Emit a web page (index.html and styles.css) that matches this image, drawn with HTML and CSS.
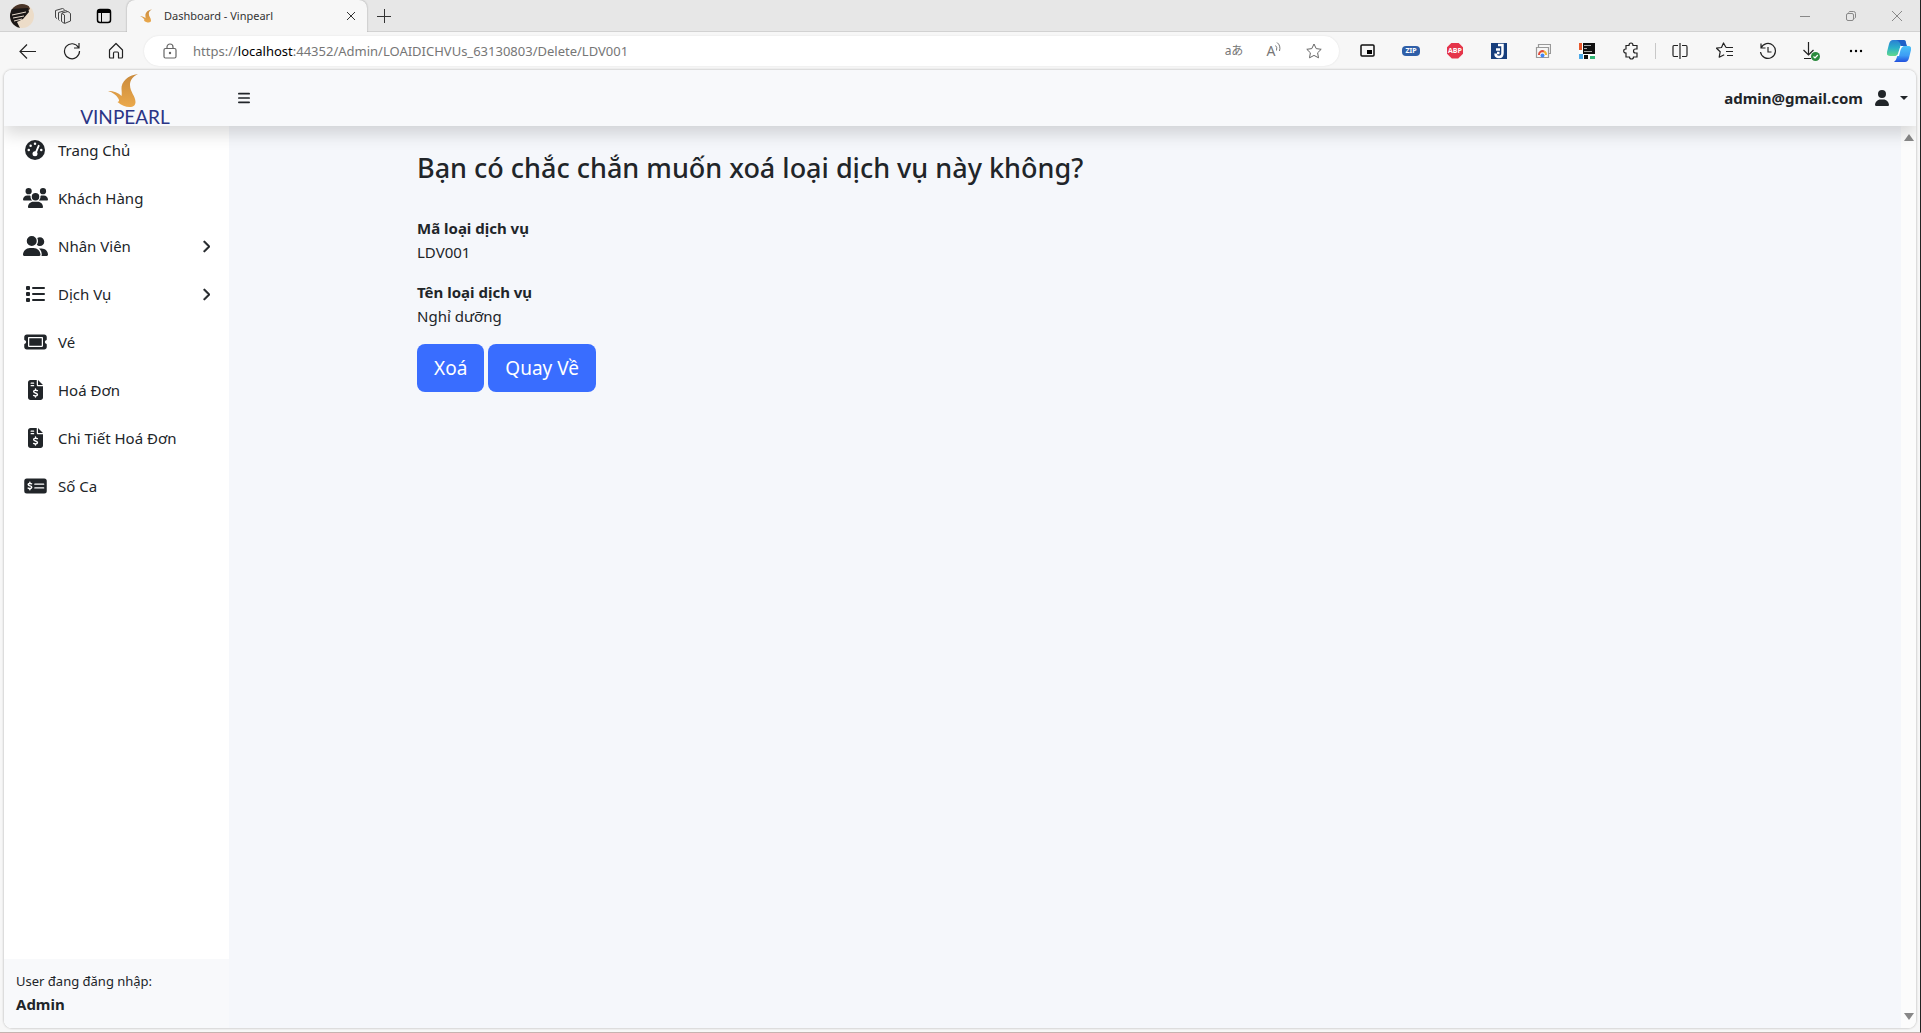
FILE: index.html
```html
<!DOCTYPE html>
<html lang="vi">
<head>
<meta charset="utf-8">
<title>Dashboard - Vinpearl</title>
<link rel="stylesheet" href="styles.css">
</head>
<body>
<svg class="defs" aria-hidden="true">
  <defs>
    <linearGradient id="gold" x1="0" y1="0" x2="0" y2="1"><stop offset="0" stop-color="#c98a3c"/><stop offset="1" stop-color="#eba94c"/></linearGradient>
    <linearGradient id="cpA" x1="0" y1="0" x2="0" y2="1"><stop offset="0" stop-color="#2a7fd4"/><stop offset=".5" stop-color="#2bb0c9"/><stop offset="1" stop-color="#63d98b"/></linearGradient>
    <linearGradient id="cpB" x1="0" y1="0" x2="0" y2="1"><stop offset="0" stop-color="#4cc3f7"/><stop offset=".6" stop-color="#3d9cf5"/><stop offset="1" stop-color="#2250dd"/></linearGradient>
    <clipPath id="round"><circle cx="12" cy="12" r="12"/></clipPath>
    <symbol id="bird" viewBox="0 0 30 33"><path fill="url(#gold)" d="M30 0C20 1 13 8 13.500 15c.2 3 .5 5 0 7C10 18.500 6 17 0 17c5 1.500 8 4 10 7 1.500 2.500 1.500 3.500-.5 4 4 3.500 8 5 12 5 4 0 6-2 6-5 0-6-5.500-10-5.500-17 0-5 3-8.500 8-11z"/></symbol>
    <symbol id="invoice" viewBox="0 0 384 512"><path fill="currentColor" fill-rule="evenodd" d="M64 0C28.700 0 0 28.700 0 64v384c0 35.300 28.700 64 64 64h256c35.300 0 64-28.700 64-64V160H256c-17.700 0-32-14.300-32-32V0zM256 0v128h128zM64 80c0-8.800 7.200-16 16-16h64c8.800 0 16 7.200 16 16s-7.200 16-16 16H80c-8.800 0-16-7.200-16-16zM64 144c0-8.800 7.200-16 16-16h64c8.800 0 16 7.200 16 16s-7.200 16-16 16H80c-8.800 0-16-7.200-16-16z"/><path fill="none" stroke="#fff" stroke-width="36" stroke-linecap="round" d="M192 232v30M192 406v30M240 272c-30-10-96-18-96 24 0 50 98 26 98 78 0 44-66 38-98 22"/></symbol>
    <symbol id="chevron" viewBox="0 0 320 512"><path fill="currentColor" stroke="currentColor" stroke-width="24" d="M310.600 233.400c12.500 12.500 12.500 32.800 0 45.300l-192 192c-12.500 12.500-32.800 12.500-45.300 0s-12.500-32.800 0-45.300L242.700 256 73.400 86.600c-12.500-12.500-12.500-32.800 0-45.300s32.800-12.500 45.300 0l192 192z"/></symbol>
  </defs>
</svg>
<div class="browser">
  <div class="tabstrip">
    <div class="strip-tools">
      <button class="slot" aria-label="Profile"><svg width="24" height="24"><g clip-path="url(#round)"><path fill="#ecdcc8" d="M0 0h24v24H0z"/><path fill="#4a3528" d="M0 0h18l2 5-4 3H0z"/><path fill="#1b1716" d="M0 5l18-1 1 4-6 7-6 3 3 6H5L0 18z"/><path stroke="#e8dccd" stroke-width="1" d="M2 11l14-3M3 14l11-2M4 17l8-2"/></g></svg></button>
      <button class="slot" aria-label="Workspaces"><svg width="18" height="18" fill="none" stroke="#444"><path d="M8 6l6-1.500 2.500 2V14l-6 2.500-3-2V8zM8 6.500l2.500 1.500v8M5.500 13.500l-1-.8V5.500l7-2 2 1M3 11.500l-1.500-1V3.500l7-2 2 1"/></svg></button>
      <button class="slot" aria-label="Tab actions"><svg width="16" height="16" fill="none" stroke="#000"><rect x="1.500" y="1.500" width="13" height="13" rx="2.500" stroke-width="1.500"/><path stroke-width="3" d="M2 3.500h12"/><path d="M5.500 4v10"/></svg></button>
    </div>
    <div class="tab">
      <svg class="favicon" width="12" height="14"><use href="#bird"/></svg>
      <span class="tab-title">Dashboard - Vinpearl</span>
      <button class="tab-close" aria-label="Close tab"><svg width="10" height="10" stroke="#333"><path d="M1 1l8 8M9 1l-8 8"/></svg></button>
    </div>
    <button class="new-tab" aria-label="New tab"><svg width="14" height="14" stroke="#333"><path d="M7.500 0v14M0 7.500h14"/></svg></button>
    <div class="window-controls">
      <button aria-label="Minimize"><svg width="10" height="10" stroke="#888"><path d="M0 5.500h10"/></svg></button>
      <button aria-label="Restore"><svg width="10" height="10" fill="none" stroke="#888"><rect x=".5" y="2.500" width="7" height="7" rx="1.500"/><path d="M2.500 1.500q.5-1 1.500-1h3.500q2 0 2 2V6q0 1-1 1.500"/></svg></button>
      <button aria-label="Close"><svg width="10" height="10" stroke="#888"><path d="M0 0l10 10M10 0L0 10"/></svg></button>
    </div>
  </div>

  <div class="toolbar">
    <div class="nav-tools">
      <button class="tool" aria-label="Back"><svg width="18" height="16" fill="none" stroke="#222" stroke-width="1.200"><path d="M17 8.500H1.500M8 1.500l-7 7 7 7"/></svg></button>
      <button class="tool" aria-label="Refresh"><svg width="18" height="18" fill="none" stroke="#222" stroke-width="1.200"><path d="M15.500 5.500A7.500 7.500 0 1 0 16.500 9M16 1v5h-5"/></svg></button>
      <button class="tool" aria-label="Home"><svg width="16" height="18" fill="none" stroke="#222" stroke-width="1.200" stroke-linejoin="round"><path d="M1.500 8L8 1.500 14.500 8v7q0 1-1 1h-3v-4.500q0-1.500-1-1.500h-3q-1 0-1 1.500V16h-3q-1 0-1-1z"/></svg></button>
    </div>
    <div class="address">
      <svg class="lock" width="14" height="16" fill="none" stroke="#666" stroke-width="1.200"><rect x="1" y="5.500" width="12" height="9.500" rx="1.500"/><path d="M4 5.500V4a3 3 0 0 1 6 0v1.500"/><circle cx="7" cy="10" r=".6" fill="#666"/></svg>
      <span class="url">https://<b>localhost</b>:44352/Admin/LOAIDICHVUs_63130803/Delete/LDV001</span>
      <div class="address-actions">
        <button class="translate" aria-label="Translate">aあ</button>
        <button class="read" aria-label="Read aloud"><span>A</span><svg width="6" height="11" fill="none" stroke="#777"><path d="M.5 3.500q2 1.500 1 5M2 .5q4 3 2.500 8.500"/></svg></button>
        <button aria-label="Favorite"><svg width="16" height="16" fill="none" stroke="#666" stroke-linejoin="round"><path d="M8 1l2.200 4.600 5 .7-3.600 3.500.9 5L8 12.400l-4.500 2.400.9-5L.8 6.300l5-.7z"/></svg></button>
      </div>
    </div>
    <div class="extensions">
      <button class="tool" aria-label="Picture in picture"><svg width="15" height="13"><rect x="1" y="1" width="13" height="11" rx="1" fill="none" stroke="#111" stroke-width="1.500"/><path d="M7 6h5v4H7z"/></svg></button>
      <button class="tool" aria-label="Zip"><span class="zip">ZIP</span></button>
      <button class="tool" aria-label="Adblock"><span class="abp">ABP</span></button>
      <button class="tool" aria-label="J3"><svg width="16" height="16"><path fill="#173e7c" d="M0 0h16v16H0z"/><path fill="none" stroke="#fff" stroke-width="2.500" d="M7 2h4.500v8q0 4-3.500 4-3.500 0-3.500-3.500M9 6.500H5M8.500 10H6"/></svg></button>
      <button class="tool" aria-label="Gallery"><svg width="16" height="14" fill="none"><path stroke="#999" d="M3.500 3V.5h12v9H14M1.500 3.500h12v10h-12z" stroke-width="1.200"/><path stroke="#e04a3a" stroke-width="2" d="M4 11a3.500 3.500 0 0 1 5-3.500"/><path stroke="#f2b632" stroke-width="2" d="M9 7.500a3.500 3.500 0 0 1 2 3.500"/><circle cx="7.500" cy="11.500" r="2" fill="#4285f4"/></svg></button>
      <button class="tool" aria-label="Design"><svg width="16" height="16"><path fill="#fff" d="M0 0h16v16H0z"/><path fill="#111" d="M4 0h12v11H4zM5 12h4v4H5z"/><path fill="#e8582c" d="M0 0h3v7H0z"/><path fill="#4ba9e8" d="M0 11h4v5H0z"/><path fill="#2fb573" d="M11 13h5v3h-5z"/><path stroke="#aaa" d="M5 2.500h7M5 5.500h3M5 8.500h8"/></svg></button>
      <button class="tool" aria-label="Extensions"><svg width="16" height="18" fill="none" stroke="#222" stroke-width="1.200"><path d="M3 3.500h3q0-2.500 2-2.500t2 2.500h4V7h-1.500q-2 0-2 2t2 2H14v4h-3.500q0 2-2 2t-2-2H3v-4Q.7 11 .7 9T3 7z"/></svg></button>
      <span class="divider"></span>
      <button class="tool" aria-label="Split screen"><svg width="16" height="16" fill="none" stroke="#222" stroke-width="1.200"><path d="M6 2.500H2Q1 2.500 1 4v8q0 1.500 1 1.500h4M10 2.500h4q1 0 1 1.500v8q0 1.500-1 1.500h-4M8 0v16"/></svg></button>
      <button class="tool" aria-label="Favorites"><svg width="17" height="17" fill="none" stroke="#222" stroke-width="1.200" stroke-linejoin="round"><path d="M10 5.500L7.500 1l-2 4.500-5 .7 3.700 3.500-1 5.500 5-2.500M10 5.500h7M10 9.500h7M11 13.500h6"/></svg></button>
      <button class="tool" aria-label="History"><svg width="18" height="18" fill="none" stroke="#222" stroke-width="1.200"><path d="M2 6a7.500 7.500 0 1 1-.5 4M2 1.500V6h4.500M9 5v5h3.500"/></svg></button>
      <button class="tool" aria-label="Downloads"><svg width="18" height="20" fill="none"><path stroke="#222" stroke-width="1.200" d="M5.500 1v13M.5 9l5 5 5-5M1 17.500h7"/><circle cx="12.500" cy="15.500" r="4.500" fill="#2b8a3e"/><path stroke="#fff" stroke-width="1.200" d="M10.500 15.500l1.500 1.500 2.800-3"/></svg></button>
      <button class="tool" aria-label="More"><svg width="14" height="4"><circle cx="2" cy="2" r="1.200"/><circle cx="7" cy="2" r="1.200"/><circle cx="12" cy="2" r="1.200"/></svg></button>
      <button class="tool copilot" aria-label="Copilot"><svg width="24" height="22"><path fill="url(#cpA)" d="M6 0h11q-2 1-3 5l-2 7q-1 4-4 4H3q-4 0-3-4l2-8Q3 0 6 0z"/><path fill="url(#cpB)" d="M17 6h4q4 0 3 4l-2 8q-1 4-4 4H7q2-1 3-5l2-7q1-4 5-4z"/><path fill="#2060c8" d="M9 0h8q2 0 2 3l1 3h-6q-1-5-5-6z"/><path fill="#fff" d="M13.500 6h3q-2 1-3 4l-1.500 6h-3q2-1 2.500-4z"/></svg></button>
    </div>
  </div>

  <div class="page">
    <header class="topnav">
      <a class="brand" href="#"><svg width="30" height="33"><use href="#bird"/></svg><span>VINPEARL</span></a>
      <button class="menu-toggle" aria-label="Menu"><svg width="12" height="14" viewBox="0 0 448 512"><path fill="currentColor" d="M32 64h384a32 32 0 0 1 0 64H32a32 32 0 0 1 0-64zM32 224h384a32 32 0 0 1 0 64H32a32 32 0 0 1 0-64zM32 384h384a32 32 0 0 1 0 64H32a32 32 0 0 1 0-64z"/></svg></button>
      <button class="account"><span>admin@gmail.com</span><svg width="14" height="16" viewBox="0 0 448 512"><path fill="currentColor" d="M224 256A128 128 0 1 0 224 0a128 128 0 1 0 0 256zm-45.700 48C79.800 304 0 383.800 0 482.300 0 498.700 13.300 512 29.700 512h388.600c16.400 0 29.700-13.300 29.700-29.700C448 383.800 368.200 304 269.700 304z"/></svg><i class="caret"></i></button>
    </header>
    <div class="body">
      <aside class="sidebar">
        <nav class="menu">
          <a href="#"><span class="icon"><svg width="20" height="20" viewBox="0 0 512 512"><circle cx="256" cy="256" r="256" fill="currentColor"/><g fill="#fff"><circle cx="256" cy="96" r="32"/><circle cx="144" cy="144" r="32"/><circle cx="96" cy="256" r="32"/><circle cx="416" cy="256" r="32"/><circle cx="256" cy="352" r="64"/></g><path stroke="#fff" stroke-width="48" stroke-linecap="round" d="M266 350l84-202"/></svg></span>Trang Chủ</a>
          <a href="#"><span class="icon"><svg width="25" height="20" viewBox="0 0 640 512"><path fill="currentColor" d="M144 0a80 80 0 1 1 0 160A80 80 0 1 1 144 0zM512 0a80 80 0 1 1 0 160A80 80 0 1 1 512 0zM0 298.700C0 239.800 47.800 192 106.700 192h42.700c15.900 0 31 3.500 44.600 9.700-1.300 7.200-1.900 14.700-1.900 22.300 0 38.200 16.800 72.500 43.300 96H21.300C9.600 320 0 310.400 0 298.700zM405.300 320h-.7c26.600-23.500 43.300-57.800 43.300-96 0-7.600-.7-15-1.900-22.300 13.600-6.300 28.700-9.700 44.600-9.700h42.700C592.200 192 640 239.800 640 298.700c0 11.800-9.600 21.300-21.300 21.300zM224 224a96 96 0 1 1 192 0 96 96 0 1 1-192 0zM128 485.300C128 411.700 187.700 352 261.300 352h117.300C452.300 352 512 411.700 512 485.300c0 14.700-11.900 26.700-26.700 26.700H154.600c-14.700 0-26.700-11.900-26.700-26.700z"/></svg></span>Khách Hàng</a>
          <a href="#"><span class="icon"><svg width="25" height="20" viewBox="0 0 640 512"><path fill="currentColor" d="M96 128a128 128 0 1 1 256 0A128 128 0 1 1 96 128zM0 482.300C0 383.800 79.800 304 178.300 304h91.400C368.200 304 448 383.800 448 482.300c0 16.400-13.300 29.700-29.700 29.700H29.700C13.300 512 0 498.700 0 482.300zM609.300 512H471.500c5.400-9.400 8.600-20.300 8.600-32v-8c0-60.700-27.100-115.200-69.800-151.800 2.400-.1 4.700-.2 7.100-.2h61.400C567.800 320 640 392.200 640 481.300c0 17-13.800 30.700-30.700 30.700zM432 256c-31 0-59-12.600-79.300-32.900C372.400 196.500 384 163.600 384 128c0-26.800-6.600-52.100-18.300-74.300C384.300 40.100 407.200 32 432 32c61.900 0 112 50.100 112 112s-50.100 112-112 112z"/></svg></span>Nhân Viên<svg class="chev" width="8" height="13"><use href="#chevron"/></svg></a>
          <a href="#"><span class="icon"><svg width="20" height="20" viewBox="0 0 20 20" fill="currentColor"><rect x="1" y="2" width="4" height="4" rx="1"/><rect x="1" y="8" width="4" height="4" rx="1"/><rect x="1" y="14" width="4" height="4" rx="1"/><rect x="7" y="3" width="13" height="2" rx="1"/><rect x="7" y="9" width="13" height="2" rx="1"/><rect x="7" y="15" width="13" height="2" rx="1"/></svg></span>Dịch Vụ<svg class="chev" width="8" height="13"><use href="#chevron"/></svg></a>
          <a href="#"><span class="icon"><svg width="23" height="20" viewBox="0 0 576 512"><path fill="currentColor" fill-rule="evenodd" d="M64 64C28.700 64 0 92.700 0 128v64c0 8.800 7.400 15.700 15.700 18.600C34.500 217.100 48 235 48 256s-13.500 38.900-32.300 45.400C7.400 304.300 0 311.200 0 320v64c0 35.300 28.700 64 64 64h448c35.300 0 64-28.700 64-64v-64c0-8.800-7.400-15.700-15.700-18.600C541.500 294.900 528 277 528 256s13.500-38.900 32.300-45.400c8.300-2.900 15.700-9.800 15.700-18.600v-64c0-35.300-28.700-64-64-64zM96 152c0-13 11-24 24-24h336c13 0 24 11 24 24v208c0 13-11 24-24 24H120c-13 0-24-11-24-24zM128 160h320v192H128z"/></svg></span>Vé</a>
          <a href="#"><span class="icon"><svg width="15" height="20"><use href="#invoice"/></svg></span>Hoá Đơn</a>
          <a href="#"><span class="icon"><svg width="15" height="20"><use href="#invoice"/></svg></span>Chi Tiết Hoá Đơn</a>
          <a href="#"><span class="icon"><svg width="23" height="20" viewBox="0 0 576 512"><rect y="64" width="576" height="384" rx="64" fill="currentColor"/><path fill="none" stroke="#fff" stroke-width="36" stroke-linecap="round" d="M144 160v20M144 328v22M190 200c-30-14-90-14-90 20 0 44 92 24 92 70 0 40-62 36-92 20M272 208h224M272 304h224"/></svg></span>Số Ca</a>
        </nav>
        <div class="session"><small>User đang đăng nhập:</small><strong>Admin</strong></div>
      </aside>
      <main class="main">
        <div class="container">
          <h1>Bạn có chắc chắn muốn xoá loại dịch vụ này không?</h1>
          <dl>
            <dt>Mã loại dịch vụ</dt><dd>LDV001</dd>
            <dt>Tên loại dịch vụ</dt><dd>Nghỉ dưỡng</dd>
          </dl>
          <form class="actions"><button type="button" class="btn">Xoá</button><a class="btn" href="#">Quay Về</a></form>
        </div>
      </main>
      <div class="scrollbar"><i class="up"></i><i class="down"></i></div>
    </div>
  </div>
</div>
</body>
</html>
```
FILE: styles.css
```css
* { box-sizing: border-box; }
body {
  margin: 0;
  font: 15px/24px "Noto Sans", "Open Sans", "Noto Sans CJK JP", sans-serif;
  color: #212529;
}
button { border: 0; padding: 0; margin: 0; background: none; font: inherit; color: inherit; }
a { color: inherit; text-decoration: none; }
svg { display: block; flex: none; }
.defs { position: absolute; width: 0; height: 0; }

.browser {
  display: flex;
  flex-direction: column;
  height: 100vh;
  background: #f7f7f7;
  border-right: 1px solid #222;
  border-bottom: 1px solid #c5b3b0;
}

/* Tab strip */
.tabstrip {
  display: flex;
  flex: none;
  height: 32px;
  background: #e7e7e7;
  box-shadow: inset 0 -1px #d2d2d2;
}
.strip-tools { display: flex; width: 127px; padding: 0 3px 0 1px; }
.slot { flex: 1; display: grid; place-items: center; }
.tab {
  display: flex;
  align-items: center;
  width: 240px;
  padding: 0 10px 0 13px;
  background: #f7f7f7;
  border-radius: 8px 8px 0 0;
  box-shadow: 0 0 2px rgba(0, 0, 0, .35);
  clip-path: inset(0 -3px 0 -3px);
}
.tab-title { margin-left: 12px; font-size: 11px; color: #333; }
.tab-close { margin-left: auto; padding: 0 1px; }
.new-tab { width: 34px; display: grid; place-items: center; }
.window-controls { display: flex; margin-left: auto; }
.window-controls button { width: 46px; display: grid; place-items: center; }

/* Address toolbar */
.toolbar { display: flex; flex: none; align-items: center; height: 37px; padding-left: 6px; }
.nav-tools, .extensions { display: flex; align-items: center; flex: none; }
.tool { width: 44px; height: 32px; display: grid; place-items: center; }
.extensions .copilot { width: 42px; }
.address {
  display: flex;
  align-items: center;
  flex: 1;
  height: 30px;
  margin: 0 6px;
  padding: 0 5px 0 19px;
  background: #fff;
  border-radius: 15px;
  box-shadow: 0 0 2px rgba(0, 0, 0, .1);
}
.url { margin-left: 16px; font-size: 13px; color: #767676; white-space: nowrap; }
.url b { font-weight: 400; color: #000; }
.address-actions { display: flex; margin-left: auto; color: #777; }
.address-actions button { display: flex; align-items: center; justify-content: center; width: 40px; height: 30px; }
.translate { font-size: 12px; }
.read { font-size: 14px; }
.read svg { margin-bottom: 6px; }
.zip { padding: 0 3px; border-radius: 4px; background: #2f5fa8; color: #fff; font-size: 7px; font-weight: 700; line-height: 10px; }
.abp {
  width: 16px;
  background: #e5344a;
  color: #fff;
  font: 700 7px/16px "Open Sans", sans-serif;
  clip-path: polygon(30% 0, 70% 0, 100% 30%, 100% 70%, 70% 100%, 30% 100%, 0 70%, 0 30%);
}
.divider { width: 1px; height: 16px; margin: 0 2px; background: #c8c8c8; }

/* Page viewport */
.page {
  display: flex;
  flex-direction: column;
  flex: 1;
  min-height: 0;
  margin: 1px 4px 4px;
  border-radius: 8px;
  overflow: hidden;
  background: #fff;
  box-shadow: 0 0 2px 1px rgba(0, 0, 0, .14);
}
.topnav {
  position: relative;
  z-index: 1;
  display: flex;
  align-items: center;
  flex: none;
  height: 56px;
  background: #f8f9fb;
  box-shadow: 0 8px 16px rgba(0, 0, 0, .15);
}
.brand { display: flex; flex-direction: column; align-items: center; width: 225px; padding: 4px 0 0 17px; }
.brand svg { margin-right: 4px; }
.brand span { font: 19px/20px Lato, sans-serif; color: #2b3586; }
.menu-toggle { padding: 8px; margin-left: 1px; }
.account { display: flex; align-items: center; margin-left: auto; padding-right: 8px; font-weight: 700; }
.account svg { margin: 0 11px 0 12px; }
.caret { border: 4px solid transparent; border-top-color: currentColor; border-bottom: 0; }

.body { display: flex; flex: 1; min-height: 0; }
.sidebar { display: flex; flex-direction: column; flex: none; width: 225px; background: #fff; }
.menu { flex: 1; }
.menu a { display: flex; align-items: center; height: 48px; padding: 0 19px 0 18px; }
.icon { display: grid; place-items: center; width: 26px; margin-right: 10px; }
.chev { margin-left: auto; }
.session { display: flex; flex-direction: column; padding: 12px; background: #f8f9fb; }
.session small { font-size: 13px; line-height: 21px; }

.main { flex: 1; background: #f5f7fb; }
.container { max-width: 1320px; margin: 0 auto; padding: 24px 12px; }
h1 { margin: 0 0 30px; font-size: 27px; line-height: 36px; font-weight: 500; }
dl { margin: 0; }
dt { font-weight: 700; }
dd { margin: 0 0 16px; }
.actions { display: flex; gap: 4px; }
.btn { padding: 9px 17px; border-radius: 8px; background: #396dff; color: #fff; font-size: 19px; line-height: 30px; }

.scrollbar { display: flex; flex-direction: column; justify-content: space-between; align-items: center; width: 15px; padding: 8px 0; background: #fcfcfc; }
.scrollbar i { border: 5px solid transparent; }
.scrollbar .up { border-top: 0; border-bottom: 7px solid #888; }
.scrollbar .down { border-bottom: 0; border-top: 7px solid #888; }
```
